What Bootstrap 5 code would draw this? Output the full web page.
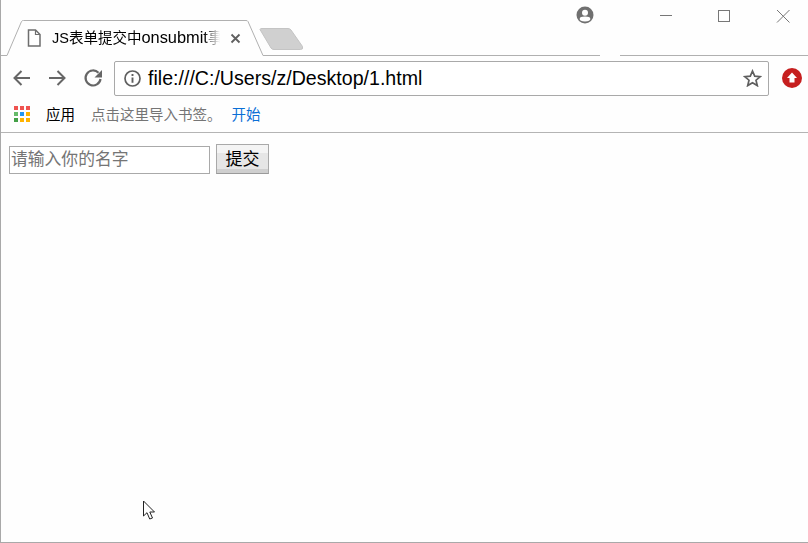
<!DOCTYPE html>
<html lang="zh-CN">
<head>
    <meta charset="UTF-8">
    <meta name="viewport" content="width=device-width, initial-scale=1.0">
    <title>JS表单提交中onsubmit事件</title>
    <link href="https://cdn.jsdelivr.net/npm/bootstrap@5.3.0/dist/css/bootstrap.min.css" rel="stylesheet">
    <script src="https://cdn.jsdelivr.net/npm/bootstrap@5.3.0/dist/js/bootstrap.bundle.min.js"></script>
    <style>
        html, body { height: 100%; overflow: hidden; }
        body {
            background: #fefefe;
            color: #000;
            font-family: "Liberation Sans", "Noto Sans CJK SC", sans-serif;
        }
        .win-frame {
            height: 543px;
            border-left: 1px solid #a9a9a9;
            border-bottom: 1px solid #a9a9a9;
            position: relative;
        }
        .tab-strip { height: 56px; position: relative; flex: none; }
        .tab-line { position: absolute; left: 0; top: 0; }
        .tab-title {
            position: absolute;
            left: 51px;
            top: 28px;
            width: 172px;
            font-size: 14.5px;
            line-height: 18px;
            white-space: nowrap;
            -webkit-mask-image: linear-gradient(to right, #000 152px, transparent 168px);
            mask-image: linear-gradient(to right, #000 152px, transparent 168px);
        }
        .tab-latin { font-size: 16.4px; }
        .tab-icon { position: absolute; }
        .ic-page { left: 26px; top: 29px; }
        .ic-close { left: 229px; top: 33px; }
        .ic-profile { left: 575px; top: 6px; }
        .win-ctrls { position: absolute; left: 0; top: 0; }
        .tool-row { height: 44px; padding-left: 10px; flex: none; }
        .tool-ic { width: 35px; flex: none; }
        .tool-reload { width: 33px; }
        .omni-box {
            width: 655px;
            height: 35px;
            flex: none;
            border: 1px solid #a9a9a9;
            border-radius: 2px;
            padding-left: 9px;
            padding-right: 6px;
            background: #fff;
        }
        .omni-url { font-size: 19.6px; margin-left: 7px; padding-top: 1px; line-height: 1; white-space: nowrap; }
        .up-dot { margin-left: 13px; }
        .mark-row {
            height: 33px;
            flex: none;
            padding-left: 12px;
            border-bottom: 1px solid #b4b4b4;
            font-size: 14.5px;
            white-space: nowrap;
        }
        .mark-grid { margin-bottom: 5px; }
        .mark-apps { margin-left: 15px; }
        .mark-hint { margin-left: 16px; color: #757575; }
        .mark-start { margin-left: 10px; color: #0b6fd6; }
        .page-form { padding: 11px 0 0 8px; }
        .name-input {
            width: 201px;
            height: 28px;
            margin-top: 2px;
            padding: 0 1px;
            border: 1px solid #a9a9a9;
            background: #fff;
            font-size: 16.8px;
            color: #000;
            outline: none;
        }
        .name-input::placeholder { color: #757575; opacity: 1; }
        .send-btn {
            width: 53px;
            height: 30px;
            margin-left: 6px;
            padding: 2px 0 0;
            border: 1px solid #a9a9a9;
            border-bottom-color: #9a9a9a;
            background: linear-gradient(#f4f4f4 0, #f4f4f4 30%, #e6e6e6 30%, #e6e6e6 85%, #cfcfcf 85%);
            font-size: 17px;
            line-height: 26px;
            color: #000;
        }
        .mouse-ptr { position: absolute; left: 140.5px; top: 500px; }
    </style>
</head>
<body>
    <div class="win-frame d-flex flex-column">
        <div class="tab-strip">
            <svg class="tab-line" width="807" height="56" viewBox="0 0 807 56">
                <path d="M0 55.5H6L20.500 21.500Q21 20.500 22.500 20.500H245Q246.500 20.500 247 21.500L262 55.500H599M619 55.500H807" fill="none" stroke="#b0b0b0"/>
                <path d="M259 29.500Q259 28.500 261 28.500H287Q289 28.500 290 30L301.500 46.500Q302.500 49.500 299.500 49.500H273Q271 49.500 270 48Z" fill="#d0d0d0" stroke="#c4c4c4"/>
            </svg>
            <svg class="tab-icon ic-page" width="14" height="18" viewBox="0 0 14 18">
                <path d="M1.500 1H8.500L13 5.500V17H1.500Z" fill="#fff" stroke="#6e6e6e" stroke-width="1.500"/>
                <path d="M8.500 1V5.500H13" fill="none" stroke="#6e6e6e" stroke-width="1.200"/>
            </svg>
            <div class="tab-title">JS表单提交中<span class="tab-latin">onsubmit</span>事</div>
            <svg class="tab-icon ic-close" width="11" height="11" viewBox="0 0 11 11">
                <path d="M1.500 1.500L9.500 9.500M9.500 1.500L1.500 9.500" stroke="#5f5f5f" stroke-width="1.800"/>
            </svg>
            <svg class="tab-icon ic-profile" width="18" height="18" viewBox="0 0 18 18">
                <circle cx="9" cy="9" r="8.500" fill="#707070"/>
                <circle cx="9" cy="6.700" r="3" fill="#fff"/>
                <ellipse cx="9" cy="13" rx="5.300" ry="2.400" fill="#fff"/>
            </svg>
            <svg class="win-ctrls" width="807" height="30" viewBox="0 0 807 30">
                <path d="M659 15.500H671" stroke="#777"/>
                <rect x="717.500" y="10.500" width="11" height="11" fill="none" stroke="#777"/>
                <path d="M776 10L788.500 22.500M788.500 10L776 22.500" stroke="#777"/>
            </svg>
        </div>

        <div class="tool-row d-flex align-items-center">
            <svg class="tool-ic" width="35" height="20" viewBox="0 0 35 20">
                <path d="M19 10H4M10.500 3L3.500 10L10.500 17" fill="none" stroke="#666" stroke-width="2"/>
            </svg>
            <svg class="tool-ic" width="35" height="20" viewBox="0 0 35 20">
                <path d="M3 10H18.500M11.500 3L18.500 10L11.500 17" fill="none" stroke="#666" stroke-width="2"/>
            </svg>
            <svg class="tool-ic tool-reload" width="33" height="20" viewBox="0 0 33 20">
                <path d="M17.500 4.800A7.500 7.500 0 1 0 19.500 11" fill="none" stroke="#666" stroke-width="2.200"/>
                <path d="M21 2V9.500H13.500Z" fill="#666"/>
            </svg>
            <div class="omni-box d-flex align-items-center">
                <svg width="17" height="17" viewBox="0 0 17 17" class="flex-shrink-0">
                    <circle cx="8.500" cy="8.500" r="7.500" fill="none" stroke="#5f5f5f" stroke-width="1.700"/>
                    <path d="M8.500 7.500V12.800M8.500 4.100V6" stroke="#5f5f5f" stroke-width="1.900"/>
                </svg>
                <span class="omni-url flex-grow-1">file:///C:/Users/z/Desktop/1.html</span>
                <svg width="19" height="18" viewBox="0 0 19 18" class="flex-shrink-0">
                    <path d="M9.500 2L11.700 7.100L17.200 7.600L13 11.200L14.300 16.600L9.500 13.700L4.700 16.600L6 11.200L1.800 7.600L7.300 7.100Z" fill="none" stroke="#5f5f5f" stroke-width="1.700"/>
                </svg>
            </div>
            <svg class="up-dot flex-shrink-0" width="20" height="20" viewBox="0 0 20 20">
                <circle cx="10" cy="10" r="10" fill="#c61f1f"/>
                <path d="M10 4.500L15 10H12.500V14.500H7.500V10H5Z" fill="#fff"/>
            </svg>
        </div>

        <div class="mark-row d-flex align-items-center">
            <svg width="18" height="18" viewBox="0 0 18 18" class="flex-shrink-0 mark-grid">
                <rect x="1" y="1" width="4" height="4" fill="#ef5350"/><rect x="7" y="1" width="4" height="4" fill="#ef5350"/><rect x="13" y="1" width="4" height="4" fill="#ef5350"/>
                <rect x="1" y="7" width="4" height="4" fill="#66bb6a"/><rect x="7" y="7" width="4" height="4" fill="#2196f3"/><rect x="13" y="7" width="4" height="4" fill="#ffb300"/>
                <rect x="1" y="13" width="4" height="4" fill="#43a047"/><rect x="7" y="13" width="4" height="4" fill="#ffb300"/><rect x="13" y="13" width="4" height="4" fill="#ffb300"/>
            </svg>
            <span class="mark-apps">应用</span>
            <span class="mark-hint">点击这里导入书签。</span>
            <span class="mark-start">开始</span>
        </div>

        <form class="page-form d-flex align-items-start">
            <input class="name-input" type="text" placeholder="请输入你的名字">
            <button class="send-btn" type="button">提交</button>
        </form>

        <svg class="mouse-ptr" width="14" height="21" viewBox="0 0 14 21">
            <path d="M1.500 1V16L5 12.700L7.700 19L10.500 18L7.800 12H12.500Z" fill="#fff" stroke="#222"/>
        </svg>
    </div>
</body>
</html>
